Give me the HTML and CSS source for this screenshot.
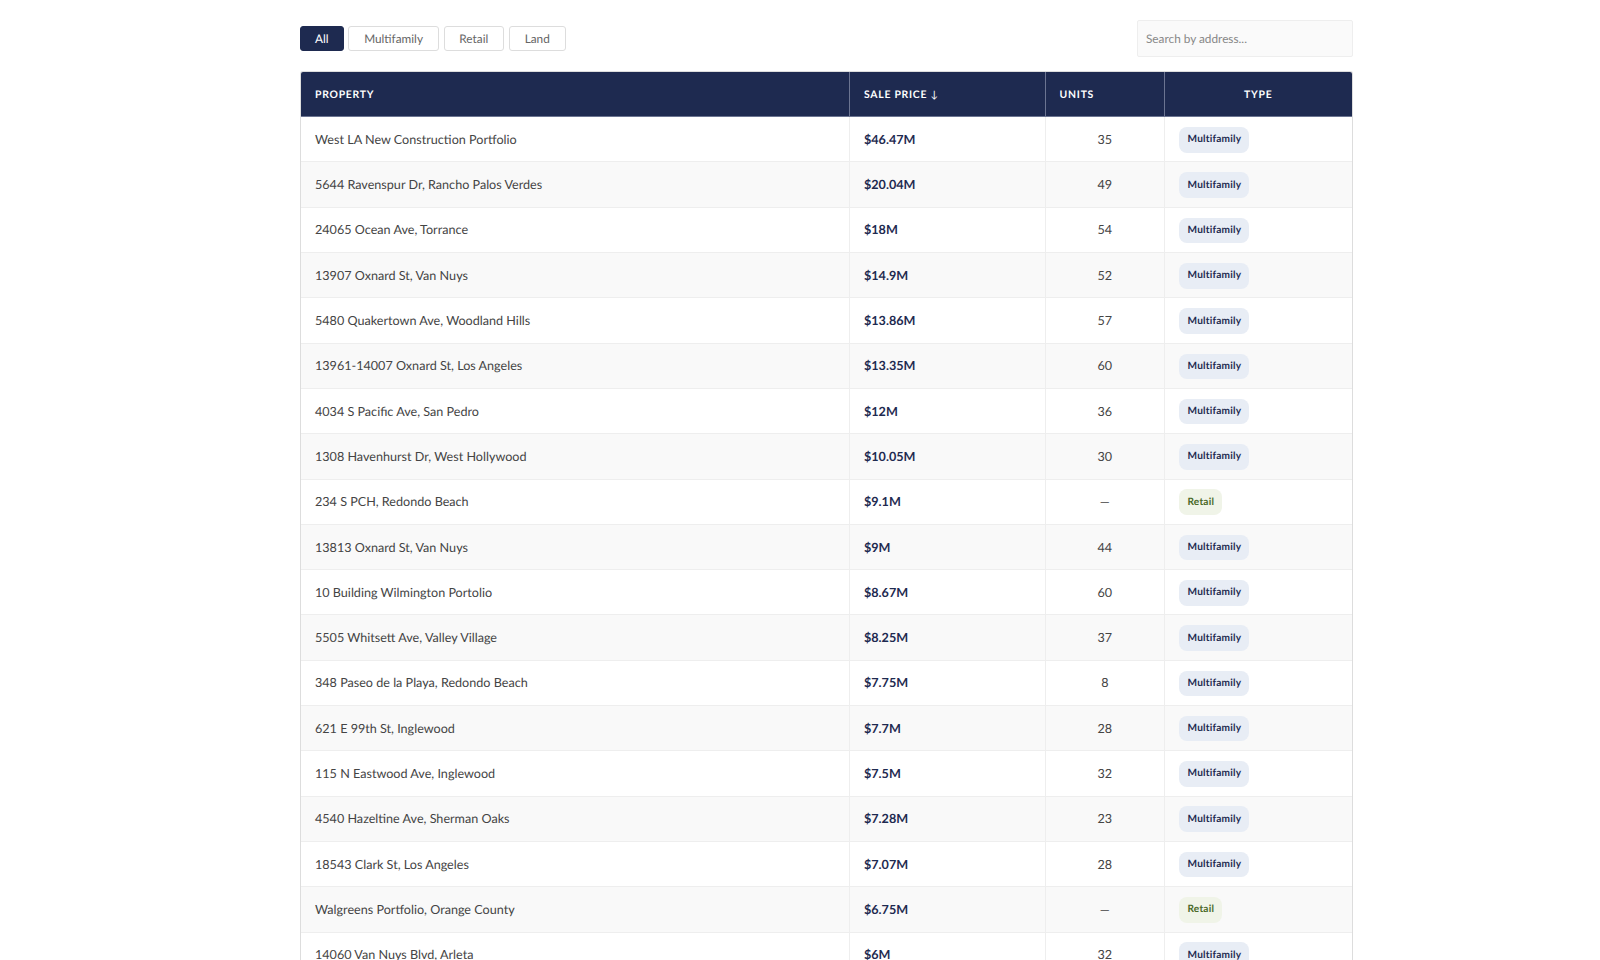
FILE: index.html
```html
<!DOCTYPE html>
<html lang="en">
<head>
<meta charset="utf-8">
<title>Sales</title>
<link rel="stylesheet" href="styles.css">
</head>
<body>
<main class="wrap">
  <div class="toolbar">
    <div class="filters">
      <button class="chip active">All</button>
      <button class="chip">Multifamily</button>
      <button class="chip">Retail</button>
      <button class="chip">Land</button>
    </div>
    <input class="search" type="text" placeholder="Search by address...">
  </div>
  <div class="card">
    <table>
      <colgroup><col class="c1"><col class="c2"><col class="c3"><col class="c4"></colgroup>
      <thead><tr><th>PROPERTY</th><th>SALE PRICE <span class="arrow">↓</span></th><th>UNITS</th><th class="ctr">TYPE</th></tr></thead>
      <tbody>
        <tr><td>West LA New Construction Portfolio</td><td class="price">$46.47M</td><td class="ctr">35</td><td class="kind"><span class="tag mf">Multifamily</span></td></tr>
        <tr><td>5644 Ravenspur Dr, Rancho Palos Verdes</td><td class="price">$20.04M</td><td class="ctr">49</td><td class="kind"><span class="tag mf">Multifamily</span></td></tr>
        <tr><td>24065 Ocean Ave, Torrance</td><td class="price">$18M</td><td class="ctr">54</td><td class="kind"><span class="tag mf">Multifamily</span></td></tr>
        <tr><td>13907 Oxnard St, Van Nuys</td><td class="price">$14.9M</td><td class="ctr">52</td><td class="kind"><span class="tag mf">Multifamily</span></td></tr>
        <tr><td>5480 Quakertown Ave, Woodland Hills</td><td class="price">$13.86M</td><td class="ctr">57</td><td class="kind"><span class="tag mf">Multifamily</span></td></tr>
        <tr><td>13961-14007 Oxnard St, Los Angeles</td><td class="price">$13.35M</td><td class="ctr">60</td><td class="kind"><span class="tag mf">Multifamily</span></td></tr>
        <tr><td>4034 S Pacific Ave, San Pedro</td><td class="price">$12M</td><td class="ctr">36</td><td class="kind"><span class="tag mf">Multifamily</span></td></tr>
        <tr><td>1308 Havenhurst Dr, West Hollywood</td><td class="price">$10.05M</td><td class="ctr">30</td><td class="kind"><span class="tag mf">Multifamily</span></td></tr>
        <tr><td>234 S PCH, Redondo Beach</td><td class="price">$9.1M</td><td class="ctr">—</td><td class="kind"><span class="tag rt">Retail</span></td></tr>
        <tr><td>13813 Oxnard St, Van Nuys</td><td class="price">$9M</td><td class="ctr">44</td><td class="kind"><span class="tag mf">Multifamily</span></td></tr>
        <tr><td>10 Building Wilmington Portolio</td><td class="price">$8.67M</td><td class="ctr">60</td><td class="kind"><span class="tag mf">Multifamily</span></td></tr>
        <tr><td>5505 Whitsett Ave, Valley Village</td><td class="price">$8.25M</td><td class="ctr">37</td><td class="kind"><span class="tag mf">Multifamily</span></td></tr>
        <tr><td>348 Paseo de la Playa, Redondo Beach</td><td class="price">$7.75M</td><td class="ctr">8</td><td class="kind"><span class="tag mf">Multifamily</span></td></tr>
        <tr><td>621 E 99th St, Inglewood</td><td class="price">$7.7M</td><td class="ctr">28</td><td class="kind"><span class="tag mf">Multifamily</span></td></tr>
        <tr><td>115 N Eastwood Ave, Inglewood</td><td class="price">$7.5M</td><td class="ctr">32</td><td class="kind"><span class="tag mf">Multifamily</span></td></tr>
        <tr><td>4540 Hazeltine Ave, Sherman Oaks</td><td class="price">$7.28M</td><td class="ctr">23</td><td class="kind"><span class="tag mf">Multifamily</span></td></tr>
        <tr><td>18543 Clark St, Los Angeles</td><td class="price">$7.07M</td><td class="ctr">28</td><td class="kind"><span class="tag mf">Multifamily</span></td></tr>
        <tr><td>Walgreens Portfolio, Orange County</td><td class="price">$6.75M</td><td class="ctr">—</td><td class="kind"><span class="tag rt">Retail</span></td></tr>
        <tr><td>14060 Van Nuys Blvd, Arleta</td><td class="price">$6M</td><td class="ctr">32</td><td class="kind"><span class="tag mf">Multifamily</span></td></tr>
      </tbody>
    </table>
  </div>
</main>
</body>
</html>
```
FILE: styles.css
```css
* { box-sizing: border-box; }
html, body { margin: 0; height: 960px; overflow: hidden; background: #fff; }
body { font-family: Lato, "Open Sans", sans-serif; color: #444; padding-left: 300px; text-rendering: geometricPrecision; }
.wrap { width: 1052.5px; padding-top: 20px; }
.toolbar { display: flex; justify-content: space-between; align-items: center; height: 36.5px; margin-bottom: 14.5px; }
.filters { display: flex; gap: 4.8px; }
.chip { font: 400 11.8px/15px Lato, sans-serif; text-rendering: geometricPrecision; height: 25px; padding: 0 14.8px; border: 1px solid #ddd; border-radius: 3px; background: #fff; color: #666; }
.chip.active { background: #1e2a50; border-color: #1e2a50; color: #fff; padding: 0 14px; }
.search { width: 215.5px; height: 36.5px; padding: 0 8px; font: 400 11.8px Lato, sans-serif; text-rendering: geometricPrecision; border: 1px solid #eee; border-radius: 2px; background: #fafafa; color: #444; }
.search::placeholder { color: #888; opacity: 1; }
.card { border-radius: 3px 3px 0 0; overflow: hidden; border: 1px solid #ddd; border-bottom: 0; }
table { width: 100%; border-collapse: collapse; table-layout: fixed; font-size: 12.6px; }
.c1 { width: 548.5px; } .c2 { width: 195.6px; } .c3 { width: 119.4px; } .c4 { width: auto; }
th { height: 44.7px; padding: 1px 14px 0; background: #1e2a50; color: #fff; font-size: 10.4px; font-weight: 700; letter-spacing: 0.75px; text-align: left; border-left: 1px solid #6b7491; border-bottom: 1px solid #6b7491; }
th:first-child { border-left: 0; }
th.ctr { text-align: center; }
.arrow { font-weight: 400; font-size: 10px; letter-spacing: 0; }
td { height: 45.3px; padding: 0 14px; border-left: 1px solid #eee; border-bottom: 1px solid #eee; vertical-align: middle; }
td:first-child { border-left: 0; }
td.kind { padding-left: 14.5px; padding-top: 1px; }
tbody tr:nth-child(even) td { background: #f9f9f9; }
td.ctr { text-align: center; }
td.price { color: #1e2a50; font-weight: 700; }
.tag { display: inline-block; font-size: 10.1px; font-weight: 700; line-height: 13px; padding: 6.3px 8px; border-radius: 8px; letter-spacing: 0.2px; }
.mf { background: #e8edf5; color: #1e2a50; }
.rt { background: #f0f4e8; color: #4a6a28; }
```
